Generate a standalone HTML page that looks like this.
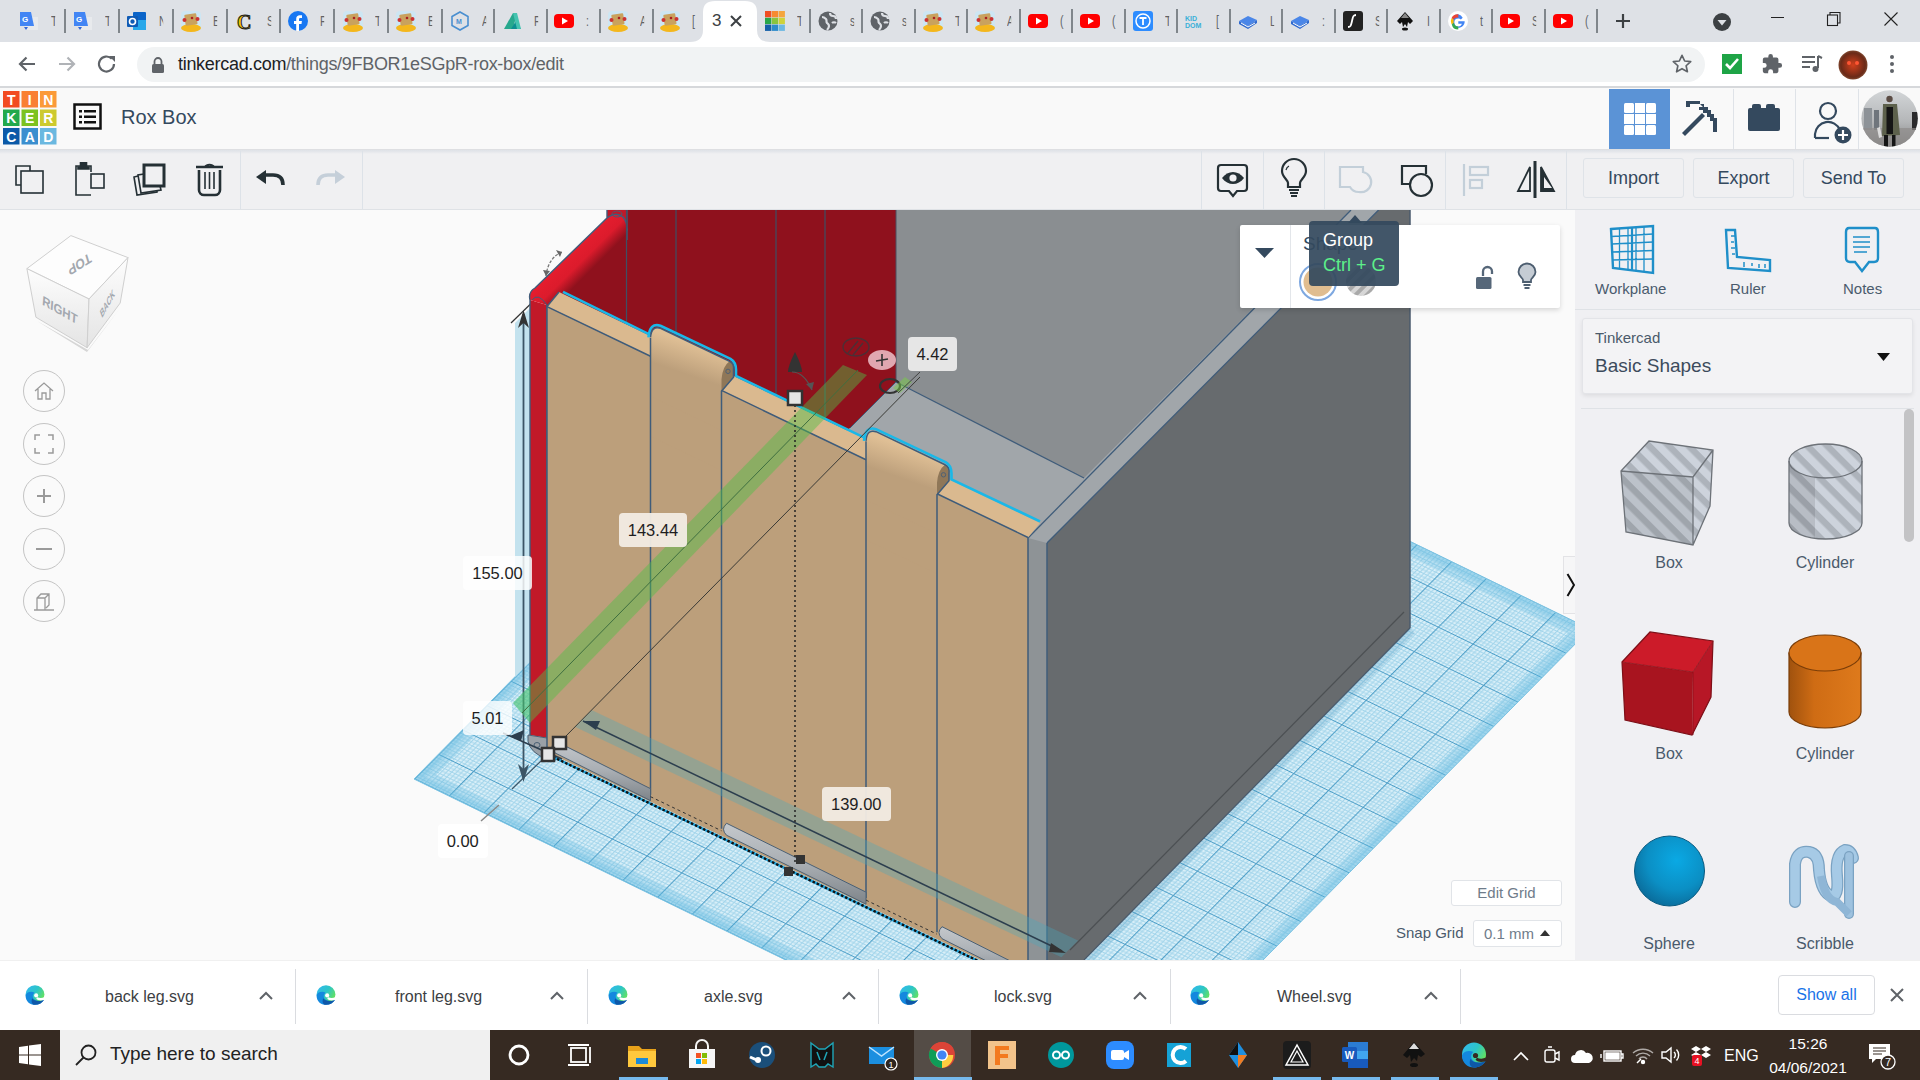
<!DOCTYPE html>
<html><head><meta charset="utf-8">
<style>
*{margin:0;padding:0;box-sizing:border-box}
html,body{width:1920px;height:1080px;overflow:hidden;background:#fafafa;font-family:"Liberation Sans",sans-serif}
.a{position:absolute}
svg{position:absolute;overflow:visible}
#tabs{left:0;top:0;width:1920px;height:42px;background:#dee1e6}
#addr{left:0;top:42px;width:1920px;height:46px;background:#fff;border-bottom:2px solid #d6d8db}
#omni{left:137px;top:47px;width:1568px;height:35px;border-radius:18px;background:#f1f3f4}
#tchead{left:0;top:88px;width:1920px;height:62px;background:#f9f9f9;border-bottom:1px solid #dedfe2}
#tbar{left:0;top:151px;width:1920px;height:59px;background:#f0f0f2}
#view{left:0;top:210px;width:1575px;height:750px;background:#fafafa;overflow:hidden}
#panel{left:1575px;top:210px;width:345px;height:750px;background:#f0f0f3}
#dl{left:0;top:960px;width:1920px;height:70px;background:#fff;border-top:1px solid #f0f0f0}
#task{left:0;top:1030px;width:1920px;height:50px;background:#362a22}
.lbl{position:absolute;background:rgba(255,255,255,.92);border-radius:4px;font-size:16.5px;color:#1e1e1e;text-align:center;line-height:34px;height:34px}
</style></head><body>
<div id="tabs" class="a">
<div class="a" style="left:64px;top:9px;width:1.5px;height:24px;background:#80868b"></div>
<div class="a" style="left:118px;top:9px;width:1.5px;height:24px;background:#80868b"></div>
<div class="a" style="left:172px;top:9px;width:1.5px;height:24px;background:#80868b"></div>
<div class="a" style="left:226px;top:9px;width:1.5px;height:24px;background:#80868b"></div>
<div class="a" style="left:279px;top:9px;width:1.5px;height:24px;background:#80868b"></div>
<div class="a" style="left:333px;top:9px;width:1.5px;height:24px;background:#80868b"></div>
<div class="a" style="left:387px;top:9px;width:1.5px;height:24px;background:#80868b"></div>
<div class="a" style="left:441px;top:9px;width:1.5px;height:24px;background:#80868b"></div>
<div class="a" style="left:493px;top:9px;width:1.5px;height:24px;background:#80868b"></div>
<div class="a" style="left:546px;top:9px;width:1.5px;height:24px;background:#80868b"></div>
<div class="a" style="left:599px;top:9px;width:1.5px;height:24px;background:#80868b"></div>
<div class="a" style="left:652px;top:9px;width:1.5px;height:24px;background:#80868b"></div>
<div class="a" style="left:809px;top:9px;width:1.5px;height:24px;background:#80868b"></div>
<div class="a" style="left:861px;top:9px;width:1.5px;height:24px;background:#80868b"></div>
<div class="a" style="left:914px;top:9px;width:1.5px;height:24px;background:#80868b"></div>
<div class="a" style="left:966px;top:9px;width:1.5px;height:24px;background:#80868b"></div>
<div class="a" style="left:1019px;top:9px;width:1.5px;height:24px;background:#80868b"></div>
<div class="a" style="left:1071px;top:9px;width:1.5px;height:24px;background:#80868b"></div>
<div class="a" style="left:1124px;top:9px;width:1.5px;height:24px;background:#80868b"></div>
<div class="a" style="left:1176px;top:9px;width:1.5px;height:24px;background:#80868b"></div>
<div class="a" style="left:1229px;top:9px;width:1.5px;height:24px;background:#80868b"></div>
<div class="a" style="left:1281px;top:9px;width:1.5px;height:24px;background:#80868b"></div>
<div class="a" style="left:1334px;top:9px;width:1.5px;height:24px;background:#80868b"></div>
<div class="a" style="left:1386px;top:9px;width:1.5px;height:24px;background:#80868b"></div>
<div class="a" style="left:1439px;top:9px;width:1.5px;height:24px;background:#80868b"></div>
<div class="a" style="left:1491px;top:9px;width:1.5px;height:24px;background:#80868b"></div>
<div class="a" style="left:1544px;top:9px;width:1.5px;height:24px;background:#80868b"></div>
<div class="a" style="left:1596px;top:9px;width:1.5px;height:24px;background:#80868b"></div>
<svg width="20" height="20" style="left:19px;top:11px" viewBox="0 0 20 20"><rect x="6" y="6" width="13" height="13" fill="#e8eaed"/><path d="M8 9l4 4" stroke="#777" stroke-width="1.2"/><path d="M1 1h11l3 14H1z" fill="#4285f4"/><path d="M5 16l4 0-2 3z" fill="#3367d6"/><text x="3" y="11" font-size="8" fill="#fff" font-family="Liberation Sans" font-weight="bold">G</text></svg>
<div class="a" style="left:51px;top:12px;width:6px;height:18px;overflow:hidden;font-size:15px;color:#5f6368;transform:scaleX(.7);transform-origin:0 0">T</div>
<svg width="20" height="20" style="left:73px;top:11px" viewBox="0 0 20 20"><rect x="6" y="6" width="13" height="13" fill="#e8eaed"/><path d="M8 9l4 4" stroke="#777" stroke-width="1.2"/><path d="M1 1h11l3 14H1z" fill="#4285f4"/><path d="M5 16l4 0-2 3z" fill="#3367d6"/><text x="3" y="11" font-size="8" fill="#fff" font-family="Liberation Sans" font-weight="bold">G</text></svg>
<div class="a" style="left:105px;top:12px;width:6px;height:18px;overflow:hidden;font-size:15px;color:#5f6368;transform:scaleX(.7);transform-origin:0 0">T</div>
<svg width="20" height="20" style="left:127px;top:11px" viewBox="0 0 20 20"><rect x="6" y="1" width="13" height="18" rx="1" fill="#0a64c9"/><path d="M6 9h13v10H6z" fill="#28a8ea"/><rect x="0" y="5" width="11" height="11" rx="1" fill="#0f5bb5"/><circle cx="5.5" cy="10.5" r="3" fill="none" stroke="#fff" stroke-width="1.6"/></svg>
<div class="a" style="left:159px;top:12px;width:6px;height:18px;overflow:hidden;font-size:15px;color:#5f6368;transform:scaleX(.7);transform-origin:0 0">N</div>
<svg width="20" height="20" style="left:181px;top:11px" viewBox="0 0 20 20"><rect x="0" y="0" width="20" height="20" rx="4" fill="#cde6f3"/><ellipse cx="10" cy="17" rx="10" ry="4" fill="#f4b71c"/><rect x="4" y="3" width="12" height="11" rx="1" fill="#c9a25e" transform="rotate(-8 10 9)"/><circle cx="3.5" cy="9" r="2" fill="#c33"/><circle cx="16.5" cy="8" r="2" fill="#c33"/><circle cx="11" cy="7" r="1.3" fill="#a22"/></svg>
<div class="a" style="left:213px;top:12px;width:6px;height:18px;overflow:hidden;font-size:15px;color:#5f6368;transform:scaleX(.7);transform-origin:0 0">E</div>
<svg width="20" height="20" style="left:235px;top:11px" viewBox="0 0 20 20"><text x="2" y="18" font-size="20" font-weight="bold" font-family="Liberation Serif" fill="#f5c400" stroke="#222" stroke-width="1">C</text></svg>
<div class="a" style="left:267px;top:12px;width:6px;height:18px;overflow:hidden;font-size:15px;color:#5f6368;transform:scaleX(.7);transform-origin:0 0">S</div>
<svg width="20" height="20" style="left:288px;top:11px" viewBox="0 0 20 20"><circle cx="10" cy="10" r="10" fill="#1877f2"/><path d="M11 20v-7h2.5l.4-3H11V8.3c0-.8.3-1.4 1.5-1.4H14V4.3c-.3 0-1.2-.1-2.2-.1-2.2 0-3.6 1.3-3.6 3.7V10H6v3h2.2v7z" fill="#fff"/></svg>
<div class="a" style="left:320px;top:12px;width:6px;height:18px;overflow:hidden;font-size:15px;color:#5f6368;transform:scaleX(.7);transform-origin:0 0">F</div>
<svg width="20" height="20" style="left:343px;top:11px" viewBox="0 0 20 20"><rect x="0" y="0" width="20" height="20" rx="4" fill="#cde6f3"/><ellipse cx="10" cy="17" rx="10" ry="4" fill="#f4b71c"/><rect x="4" y="3" width="12" height="11" rx="1" fill="#c9a25e" transform="rotate(-8 10 9)"/><circle cx="3.5" cy="9" r="2" fill="#c33"/><circle cx="16.5" cy="8" r="2" fill="#c33"/><circle cx="11" cy="7" r="1.3" fill="#a22"/></svg>
<div class="a" style="left:375px;top:12px;width:6px;height:18px;overflow:hidden;font-size:15px;color:#5f6368;transform:scaleX(.7);transform-origin:0 0">T</div>
<svg width="20" height="20" style="left:396px;top:11px" viewBox="0 0 20 20"><rect x="0" y="0" width="20" height="20" rx="4" fill="#cde6f3"/><ellipse cx="10" cy="17" rx="10" ry="4" fill="#f4b71c"/><rect x="4" y="3" width="12" height="11" rx="1" fill="#c9a25e" transform="rotate(-8 10 9)"/><circle cx="3.5" cy="9" r="2" fill="#c33"/><circle cx="16.5" cy="8" r="2" fill="#c33"/><circle cx="11" cy="7" r="1.3" fill="#a22"/></svg>
<div class="a" style="left:428px;top:12px;width:6px;height:18px;overflow:hidden;font-size:15px;color:#5f6368;transform:scaleX(.7);transform-origin:0 0">E</div>
<svg width="20" height="20" style="left:450px;top:11px" viewBox="0 0 20 20"><path d="M10 1l8 4.5v9L10 19l-8-4.5v-9z" fill="none" stroke="#4a8fd0" stroke-width="1.6"/><text x="6" y="13" font-size="7" fill="#4a8fd0" font-weight="bold" font-family="Liberation Sans">M</text></svg>
<div class="a" style="left:482px;top:12px;width:6px;height:18px;overflow:hidden;font-size:15px;color:#5f6368;transform:scaleX(.7);transform-origin:0 0">A</div>
<svg width="20" height="20" style="left:502px;top:11px" viewBox="0 0 20 20"><path d="M2 18L11 2h4l-4 16z" fill="#27a88e"/><path d="M9 18l5-8 5 8z" fill="#0d8f92"/><path d="M11 2h4l4 16h-4z" fill="#45c3b1"/></svg>
<div class="a" style="left:534px;top:12px;width:6px;height:18px;overflow:hidden;font-size:15px;color:#5f6368;transform:scaleX(.7);transform-origin:0 0">F</div>
<svg width="20" height="20" style="left:554px;top:11px" viewBox="0 0 20 20"><rect x="0" y="3" width="20" height="14" rx="4" fill="#ff0000"/><path d="M8 6.5l6 3.5-6 3.5z" fill="#fff"/></svg>
<div class="a" style="left:586px;top:12px;width:6px;height:18px;overflow:hidden;font-size:15px;color:#5f6368;transform:scaleX(.7);transform-origin:0 0">:</div>
<svg width="20" height="20" style="left:608px;top:11px" viewBox="0 0 20 20"><rect x="0" y="0" width="20" height="20" rx="4" fill="#cde6f3"/><ellipse cx="10" cy="17" rx="10" ry="4" fill="#f4b71c"/><rect x="4" y="3" width="12" height="11" rx="1" fill="#c9a25e" transform="rotate(-8 10 9)"/><circle cx="3.5" cy="9" r="2" fill="#c33"/><circle cx="16.5" cy="8" r="2" fill="#c33"/><circle cx="11" cy="7" r="1.3" fill="#a22"/></svg>
<div class="a" style="left:640px;top:12px;width:6px;height:18px;overflow:hidden;font-size:15px;color:#5f6368;transform:scaleX(.7);transform-origin:0 0">A</div>
<svg width="20" height="20" style="left:660px;top:11px" viewBox="0 0 20 20"><rect x="0" y="0" width="20" height="20" rx="4" fill="#cde6f3"/><ellipse cx="10" cy="17" rx="10" ry="4" fill="#f4b71c"/><rect x="4" y="3" width="12" height="11" rx="1" fill="#c9a25e" transform="rotate(-8 10 9)"/><circle cx="3.5" cy="9" r="2" fill="#c33"/><circle cx="16.5" cy="8" r="2" fill="#c33"/><circle cx="11" cy="7" r="1.3" fill="#a22"/></svg>
<div class="a" style="left:692px;top:12px;width:6px;height:18px;overflow:hidden;font-size:15px;color:#5f6368;transform:scaleX(.7);transform-origin:0 0">[</div>
<svg width="20" height="20" style="left:765px;top:11px" viewBox="0 0 20 20"><rect x="0.0" y="0.0" width="6.3" height="6.3" fill="#f04e23"/><rect x="6.8" y="0.0" width="6.3" height="6.3" fill="#f68a31"/><rect x="13.6" y="0.0" width="6.3" height="6.3" fill="#f5a53d"/><rect x="0.0" y="6.8" width="6.3" height="6.3" fill="#29a74a"/><rect x="6.8" y="6.8" width="6.3" height="6.3" fill="#8ac43f"/><rect x="13.6" y="6.8" width="6.3" height="6.3" fill="#cfd23a"/><rect x="0.0" y="13.6" width="6.3" height="6.3" fill="#1560a8"/><rect x="6.8" y="13.6" width="6.3" height="6.3" fill="#2e8ccb"/><rect x="13.6" y="13.6" width="6.3" height="6.3" fill="#6db8e2"/></svg>
<div class="a" style="left:797px;top:12px;width:6px;height:18px;overflow:hidden;font-size:15px;color:#5f6368;transform:scaleX(.7);transform-origin:0 0">T</div>
<svg width="20" height="20" style="left:818px;top:11px" viewBox="0 0 20 20"><circle cx="10" cy="10" r="9.5" fill="#5f6368"/><path d="M4 6c2 0 3 1 4 2s0 3 1 4 2 1 2 3-1 3-2 4M12 2c0 2 1 3 3 3s3 1 3 3M14 12c1-1 3-1 4 0" stroke="#dee1e6" stroke-width="2.2" fill="none"/></svg>
<div class="a" style="left:850px;top:12px;width:6px;height:18px;overflow:hidden;font-size:15px;color:#5f6368;transform:scaleX(.7);transform-origin:0 0">s</div>
<svg width="20" height="20" style="left:870px;top:11px" viewBox="0 0 20 20"><circle cx="10" cy="10" r="9.5" fill="#5f6368"/><path d="M4 6c2 0 3 1 4 2s0 3 1 4 2 1 2 3-1 3-2 4M12 2c0 2 1 3 3 3s3 1 3 3M14 12c1-1 3-1 4 0" stroke="#dee1e6" stroke-width="2.2" fill="none"/></svg>
<div class="a" style="left:902px;top:12px;width:6px;height:18px;overflow:hidden;font-size:15px;color:#5f6368;transform:scaleX(.7);transform-origin:0 0">s</div>
<svg width="20" height="20" style="left:923px;top:11px" viewBox="0 0 20 20"><rect x="0" y="0" width="20" height="20" rx="4" fill="#cde6f3"/><ellipse cx="10" cy="17" rx="10" ry="4" fill="#f4b71c"/><rect x="4" y="3" width="12" height="11" rx="1" fill="#c9a25e" transform="rotate(-8 10 9)"/><circle cx="3.5" cy="9" r="2" fill="#c33"/><circle cx="16.5" cy="8" r="2" fill="#c33"/><circle cx="11" cy="7" r="1.3" fill="#a22"/></svg>
<div class="a" style="left:955px;top:12px;width:6px;height:18px;overflow:hidden;font-size:15px;color:#5f6368;transform:scaleX(.7);transform-origin:0 0">T</div>
<svg width="20" height="20" style="left:975px;top:11px" viewBox="0 0 20 20"><rect x="0" y="0" width="20" height="20" rx="4" fill="#cde6f3"/><ellipse cx="10" cy="17" rx="10" ry="4" fill="#f4b71c"/><rect x="4" y="3" width="12" height="11" rx="1" fill="#c9a25e" transform="rotate(-8 10 9)"/><circle cx="3.5" cy="9" r="2" fill="#c33"/><circle cx="16.5" cy="8" r="2" fill="#c33"/><circle cx="11" cy="7" r="1.3" fill="#a22"/></svg>
<div class="a" style="left:1007px;top:12px;width:6px;height:18px;overflow:hidden;font-size:15px;color:#5f6368;transform:scaleX(.7);transform-origin:0 0">A</div>
<svg width="20" height="20" style="left:1028px;top:11px" viewBox="0 0 20 20"><rect x="0" y="3" width="20" height="14" rx="4" fill="#ff0000"/><path d="M8 6.5l6 3.5-6 3.5z" fill="#fff"/></svg>
<div class="a" style="left:1060px;top:12px;width:6px;height:18px;overflow:hidden;font-size:15px;color:#5f6368;transform:scaleX(.7);transform-origin:0 0">(</div>
<svg width="20" height="20" style="left:1080px;top:11px" viewBox="0 0 20 20"><rect x="0" y="3" width="20" height="14" rx="4" fill="#ff0000"/><path d="M8 6.5l6 3.5-6 3.5z" fill="#fff"/></svg>
<div class="a" style="left:1112px;top:12px;width:6px;height:18px;overflow:hidden;font-size:15px;color:#5f6368;transform:scaleX(.7);transform-origin:0 0">(</div>
<svg width="20" height="20" style="left:1133px;top:11px" viewBox="0 0 20 20"><rect x="0" y="0" width="20" height="20" rx="3" fill="#2d8cff"/><circle cx="10" cy="10" r="7" fill="none" stroke="#fff" stroke-width="1.5"/><path d="M6.5 7h7M10 7v7" stroke="#fff" stroke-width="1.8"/></svg>
<div class="a" style="left:1165px;top:12px;width:6px;height:18px;overflow:hidden;font-size:15px;color:#5f6368;transform:scaleX(.7);transform-origin:0 0">T</div>
<svg width="20" height="20" style="left:1184px;top:11px" viewBox="0 0 20 20"><text x="1" y="10" font-size="7" fill="#3ab0d8" font-weight="bold" font-family="Liberation Sans">KID</text><text x="1" y="17" font-size="7" fill="#3ab0d8" font-weight="bold" font-family="Liberation Sans">DOM</text></svg>
<div class="a" style="left:1216px;top:12px;width:6px;height:18px;overflow:hidden;font-size:15px;color:#5f6368;transform:scaleX(.7);transform-origin:0 0">[</div>
<svg width="20" height="20" style="left:1238px;top:11px" viewBox="0 0 20 20"><path d="M1 10l9-5 9 4-9 6z" fill="#4a86e8"/><path d="M1 10v3l9 5 9-6v-3l-9 6z" fill="#2f6ad0"/><path d="M3 12l7 4 7-4" stroke="#fff" stroke-width="1" fill="none"/></svg>
<div class="a" style="left:1270px;top:12px;width:6px;height:18px;overflow:hidden;font-size:15px;color:#5f6368;transform:scaleX(.7);transform-origin:0 0">L</div>
<svg width="20" height="20" style="left:1290px;top:11px" viewBox="0 0 20 20"><path d="M1 10l9-5 9 4-9 6z" fill="#4a86e8"/><path d="M1 10v3l9 5 9-6v-3l-9 6z" fill="#2f6ad0"/><path d="M3 12l7 4 7-4" stroke="#fff" stroke-width="1" fill="none"/></svg>
<div class="a" style="left:1322px;top:12px;width:6px;height:18px;overflow:hidden;font-size:15px;color:#5f6368;transform:scaleX(.7);transform-origin:0 0">:</div>
<svg width="20" height="20" style="left:1343px;top:11px" viewBox="0 0 20 20"><rect x="0" y="0" width="20" height="20" rx="3" fill="#222"/><path d="M13 4c-3 0-3 2-4 6s-1 6-4 6" stroke="#fff" stroke-width="1.8" fill="none"/></svg>
<div class="a" style="left:1375px;top:12px;width:6px;height:18px;overflow:hidden;font-size:15px;color:#5f6368;transform:scaleX(.7);transform-origin:0 0">S</div>
<svg width="20" height="20" style="left:1395px;top:11px" viewBox="0 0 20 20"><path d="M10 1l8 9-3 3-2-2-1 5-2-3-2 3-1-5-2 2-3-3z" fill="#111"/><path d="M10 2l4 5h-8z" fill="#fff" opacity=".5"/><ellipse cx="10" cy="18" rx="3" ry="1.5" fill="#111"/></svg>
<div class="a" style="left:1427px;top:12px;width:6px;height:18px;overflow:hidden;font-size:15px;color:#5f6368;transform:scaleX(.7);transform-origin:0 0">I</div>
<svg width="20" height="20" style="left:1448px;top:11px" viewBox="0 0 20 20"><circle cx="10" cy="10" r="10" fill="#fff"/><path d="M16.5 10.2h-6.2v2.5h3.6c-.4 1.6-1.8 2.8-3.6 2.8a4 4 0 010-8c1 0 1.9.4 2.6 1l1.8-1.8A6.6 6.6 0 0010.3 3.3a6.7 6.7 0 100 13.4c3.6 0 6.4-2.6 6.4-6.5z" fill="#4285f4"/><path d="M3.6 7l2.2 1.6A4 4 0 0110.3 6.8V3.3A6.7 6.7 0 003.6 7z" fill="#ea4335"/><path d="M3.8 13.4l2.2-1.8a4 4 0 004.3 4v3a6.7 6.7 0 01-6.5-5.2z" fill="#34a853"/><path d="M3.6 7a6.7 6.7 0 000 6.4l2.2-1.8a4 4 0 010-2.9z" fill="#fbbc05"/></svg>
<div class="a" style="left:1480px;top:12px;width:6px;height:18px;overflow:hidden;font-size:15px;color:#5f6368;transform:scaleX(.7);transform-origin:0 0">t</div>
<svg width="20" height="20" style="left:1500px;top:11px" viewBox="0 0 20 20"><rect x="0" y="3" width="20" height="14" rx="4" fill="#ff0000"/><path d="M8 6.5l6 3.5-6 3.5z" fill="#fff"/></svg>
<div class="a" style="left:1532px;top:12px;width:6px;height:18px;overflow:hidden;font-size:15px;color:#5f6368;transform:scaleX(.7);transform-origin:0 0">S</div>
<svg width="20" height="20" style="left:1553px;top:11px" viewBox="0 0 20 20"><rect x="0" y="3" width="20" height="14" rx="4" fill="#ff0000"/><path d="M8 6.5l6 3.5-6 3.5z" fill="#fff"/></svg>
<div class="a" style="left:1585px;top:12px;width:6px;height:18px;overflow:hidden;font-size:15px;color:#5f6368;transform:scaleX(.7);transform-origin:0 0">(</div>
<svg width="80" height="42" style="left:690px;top:0" viewBox="0 0 80 42"><path d="M0 42 Q13 42 13 30 V12 Q13 1 25 1 H55 Q67 1 67 12 V30 Q67 42 80 42 Z" fill="#fff"/></svg>
<div class="a" style="left:712px;top:11px;font-size:17px;color:#3c4043">3</div>
<svg width="14" height="14" style="left:729px;top:14px" viewBox="0 0 14 14"><path d="M2 2L12 12M12 2L2 12" stroke="#3c4043" stroke-width="2"/></svg>
<svg width="20" height="20" style="left:1613px;top:11px" viewBox="0 0 20 20"><path d="M10 3v14M3 10h14" stroke="#3c4043" stroke-width="2.2"/></svg>
<svg width="20" height="20" style="left:1712px;top:11.5px" viewBox="0 0 20 20"><circle cx="10" cy="10" r="9" fill="#3c4043"/><path d="M5.5 8h9l-4.5 5.5z" fill="#dee1e6"/></svg>
<div class="a" style="left:1771px;top:17px;width:13px;height:1px;background:#222"></div>
<svg width="16" height="16" style="left:1826px;top:11px" viewBox="0 0 16 16"><rect x="1.5" y="4" width="10" height="10.5" fill="none" stroke="#222" stroke-width="1.1"/><path d="M4 4V1.5H14V12H11.5" fill="none" stroke="#222" stroke-width="1.1"/></svg>
<svg width="16" height="16" style="left:1883px;top:11px" viewBox="0 0 16 16"><path d="M1.5 1.5L14.5 14.5M14.5 1.5L1.5 14.5" stroke="#222" stroke-width="1.1"/></svg>
</div>
<div id="addr" class="a"></div><div id="omni" class="a"></div>
<svg width="22" height="22" style="left:16px;top:53px" viewBox="0 0 22 22"><path d="M19 11H4M10.5 4.5L4 11l6.5 6.5" stroke="#5f6368" stroke-width="2.2" fill="none"/></svg>
<svg width="22" height="22" style="left:56px;top:53px" viewBox="0 0 22 22"><path d="M3 11h15M11.5 4.5L18 11l-6.5 6.5" stroke="#b0b3b7" stroke-width="2.2" fill="none"/></svg>
<svg width="22" height="22" style="left:96px;top:53px" viewBox="0 0 22 22"><path d="M18 11a7.5 7.5 0 1 1-2.2-5.3" stroke="#5f6368" stroke-width="2.2" fill="none"/><path d="M13 3h6v6z" fill="#5f6368"/></svg>
<svg width="14" height="16" style="left:151px;top:57px" viewBox="0 0 14 16"><path d="M3.5 7V4.5a3.5 3.5 0 0 1 7 0V7" stroke="#5f6368" stroke-width="1.8" fill="none"/><rect x="1" y="7" width="12" height="9" rx="1.5" fill="#5f6368"/></svg>
<div class="a" style="left:178px;top:54px;font-size:18px;color:#202124;white-space:nowrap;letter-spacing:-0.3px">tinkercad.com<span style="color:#5f6368">/things/9FBOR1eSGpR-rox-box/edit</span></div>
<svg width="22" height="22" style="left:1671px;top:53px" viewBox="0 0 24 24"><path d="M12 2.5l2.9 6.2 6.6.7-5 4.5 1.4 6.6L12 17.1l-5.9 3.4 1.4-6.6-5-4.5 6.6-.7z" fill="none" stroke="#5f6368" stroke-width="1.8" stroke-linejoin="round"/></svg>
<svg width="22" height="22" style="left:1721px;top:53px" viewBox="0 0 22 22"><rect x="1" y="1" width="20" height="20" fill="#1ea446"/><path d="M5 11l4 4 8-9" stroke="#fff" stroke-width="2.6" fill="none"/></svg>
<svg width="22" height="22" style="left:1761px;top:53px" viewBox="0 0 24 24"><path d="M20.5 11H19V7a2 2 0 0 0-2-2h-4V3.5a2.5 2.5 0 0 0-5 0V5H4a2 2 0 0 0-2 2v3.8h1.5a2.7 2.7 0 0 1 0 5.4H2V20a2 2 0 0 0 2 2h3.8v-1.5a2.7 2.7 0 0 1 5.4 0V22H17a2 2 0 0 0 2-2v-4h1.5a2.5 2.5 0 0 0 0-5z" fill="#5f6368"/></svg>
<svg width="24" height="22" style="left:1800px;top:53px" viewBox="0 0 24 22"><path d="M2 4h13M2 9h13M2 14h8" stroke="#5f6368" stroke-width="2"/><path d="M18 3v12" stroke="#5f6368" stroke-width="2"/><circle cx="15.5" cy="16" r="3" fill="#5f6368"/><path d="M18 3l4 2" stroke="#5f6368" stroke-width="2"/></svg>
<svg width="30" height="30" style="left:1838px;top:50px" viewBox="0 0 30 30"><defs><radialGradient id="av" cx=".5" cy=".5" r=".6"><stop offset="0" stop-color="#d4401c"/><stop offset=".7" stop-color="#6a2a18"/><stop offset="1" stop-color="#9a6b4a"/></radialGradient></defs><circle cx="15" cy="15" r="14.5" fill="url(#av)"/><circle cx="11" cy="13" r="2" fill="#ff5533"/><circle cx="19" cy="13" r="2" fill="#ff5533"/></svg>
<svg width="8" height="22" style="left:1888px;top:53px" viewBox="0 0 8 22"><circle cx="4" cy="4" r="2" fill="#5f6368"/><circle cx="4" cy="11" r="2" fill="#5f6368"/><circle cx="4" cy="18" r="2" fill="#5f6368"/></svg>
<div id="tchead" class="a"></div>
<svg width="56" height="56" style="left:3px;top:91px" viewBox="0 0 56 56" font-family="Liberation Sans" font-weight="bold" font-size="14" text-anchor="middle" fill="#fff">
<rect x="0" y="0" width="16.5" height="16.5" fill="#f24b22"/><rect x="18.5" y="0" width="16.5" height="16.5" fill="#f97f33"/><rect x="37" y="0" width="16.5" height="16.5" fill="#fb9a38"/>
<rect x="0" y="18.5" width="16.5" height="16.5" fill="#22a94c"/><rect x="18.5" y="18.5" width="16.5" height="16.5" fill="#7dc21f"/><rect x="37" y="18.5" width="16.5" height="16.5" fill="#cdca2e"/>
<rect x="0" y="37" width="16.5" height="16.5" fill="#0c5aa8"/><rect x="18.5" y="37" width="16.5" height="16.5" fill="#3b8fcf"/><rect x="37" y="37" width="16.5" height="16.5" fill="#6ab8e0"/>
<text x="8.25" y="13.5">T</text><text x="26.75" y="13.5">I</text><text x="45.25" y="13.5">N</text>
<text x="8.25" y="32">K</text><text x="26.75" y="32">E</text><text x="45.25" y="32">R</text>
<text x="8.25" y="50.5">C</text><text x="26.75" y="50.5">A</text><text x="45.25" y="50.5">D</text>
</svg>
<svg width="30" height="28" style="left:73px;top:103px" viewBox="0 0 30 28"><rect x="1.5" y="1.5" width="26" height="24" fill="none" stroke="#111" stroke-width="2.5"/><rect x="6" y="7" width="3" height="2.5" fill="#111"/><rect x="11" y="7" width="12" height="2.5" fill="#111"/><rect x="6" y="12.5" width="3" height="2.5" fill="#111"/><rect x="11" y="12.5" width="12" height="2.5" fill="#111"/><rect x="6" y="18" width="3" height="2.5" fill="#111"/><rect x="11" y="18" width="12" height="2.5" fill="#111"/></svg>
<div class="a" style="left:121px;top:106px;font-size:20px;color:#34495e">Rox Box</div>
<div class="a" style="left:1609px;top:89px;width:61px;height:60px;background:#5b93d6"></div>
<svg width="34" height="34" style="left:1623px;top:102px" viewBox="0 0 34 34" fill="#fff"><rect x="1" y="1" width="10" height="10" rx="1.5"/><rect x="12" y="1" width="10" height="10"/><rect x="23" y="1" width="10" height="10" rx="1.5"/><rect x="1" y="12" width="10" height="10"/><rect x="12" y="12" width="10" height="10"/><rect x="23" y="12" width="10" height="10"/><rect x="1" y="23" width="10" height="10" rx="1.5"/><rect x="12" y="23" width="10" height="10"/><rect x="23" y="23" width="10" height="10" rx="1.5"/></svg>
<div class="a" style="left:1733px;top:89px;width:1px;height:60px;background:#dfe3e8"></div>
<div class="a" style="left:1795px;top:89px;width:1px;height:60px;background:#dfe3e8"></div>
<div class="a" style="left:1858px;top:89px;width:1px;height:60px;background:#dfe3e8"></div>
<svg width="40" height="40" style="left:1682px;top:99px" viewBox="0 0 40 40" fill="#34495e"><path d="M4 2h14v3H8v3H4z"/><path d="M18 5h4v3h4v3h3v4h3v4h3v14h-4V22h-3v-4h-3v-4h-4v-3h-4V8h4z"/><path d="M20 14l3 3L6 34l-3 3-3-3 3-3z"/></svg>
<svg width="34" height="28" style="left:1747px;top:104px" viewBox="0 0 34 28" fill="#34495e"><rect x="5" y="0" width="9" height="6" rx="2"/><rect x="19" y="0" width="9" height="6" rx="2"/><rect x="1" y="4" width="32" height="23" rx="2"/></svg>
<svg width="44" height="44" style="left:1812px;top:100px" viewBox="0 0 44 44"><circle cx="16" cy="11" r="8" fill="none" stroke="#34495e" stroke-width="2.2"/><path d="M3 38v-4a13 13 0 0 1 25-4" fill="none" stroke="#34495e" stroke-width="2.2"/><path d="M3 38h14" stroke="#34495e" stroke-width="2.2"/><circle cx="31" cy="35" r="8.5" fill="#34495e"/><path d="M31 30v10M26 35h10" stroke="#fff" stroke-width="2.2"/></svg>
<svg width="58" height="58" style="left:1861px;top:90px" viewBox="1861 90 58 58"><defs><linearGradient id="avg" x1="0" y1="0" x2="0" y2="1"><stop offset="0" stop-color="#d3d6d8"/><stop offset=".55" stop-color="#b4b6b8"/><stop offset="1" stop-color="#7f7f80"/></linearGradient><clipPath id="avc"><circle cx="1889.6" cy="118.5" r="28.2"/></clipPath></defs>
<g clip-path="url(#avc)"><rect x="1861" y="90" width="58" height="58" fill="url(#avg)"/>
<rect x="1864" y="108" width="8" height="22" fill="#8d9297"/><rect x="1874" y="110" width="5" height="20" fill="#6f757c"/><rect x="1912" y="112" width="6" height="18" fill="#2a2a2c"/><rect x="1861" y="128" width="58" height="20" fill="#8e8c8a" opacity=".7"/>
<path d="M1877,128 l2,10 l3,-1 l-2,-10z" fill="#eee" opacity=".8"/>
<circle cx="1889.5" cy="99" r="3.2" fill="#5b4c44"/>
<path d="M1883,104 L1897,104 L1900,135 L1882,136 Z" fill="#5d614c"/><path d="M1886.5,107 L1893,107 L1893,134 L1886.5,134 Z" fill="#151515"/>
<path d="M1884,135 h4 v12 h-4z M1892,135 h3.5 v12 h-3.5z" fill="#151515"/></g></svg>
<div id="tbar" class="a"></div>
<div class="a" style="left:0;top:150px;width:1920px;height:4px;background:linear-gradient(#dde0e6,rgba(240,240,242,0))"></div>
<div class="a" style="left:240px;top:151px;width:1px;height:59px;background:#dde2e8"></div>
<div class="a" style="left:362px;top:151px;width:1px;height:59px;background:#dde2e8"></div>
<div class="a" style="left:1201px;top:151px;width:1px;height:59px;background:#dde2e8"></div>
<div class="a" style="left:1263px;top:151px;width:1px;height:59px;background:#dde2e8"></div>
<div class="a" style="left:1324px;top:151px;width:1px;height:59px;background:#dde2e8"></div>
<div class="a" style="left:1445px;top:151px;width:1px;height:59px;background:#dde2e8"></div>
<div class="a" style="left:1566px;top:151px;width:1px;height:59px;background:#dde2e8"></div>
<div class="a" style="left:0;top:209px;width:1920px;height:1px;background:#dfe2e6"></div>
<svg width="34" height="34" style="left:13px;top:163px" viewBox="0 0 34 34" fill="none" stroke="#253035" stroke-width="1.6"><path d="M17 8V3H3v19h5"/><rect x="8" y="8" width="22" height="22"/></svg>
<svg width="34" height="36" style="left:72px;top:162px" viewBox="0 0 34 36" fill="none" stroke="#253035" stroke-width="1.6"><path d="M19 10V4H4v29h15"/><rect x="19" y="12" width="13" height="14"/><path d="M6 5h11v2H6z" fill="#253035"/><rect x="8.5" y="0.8" width="6" height="5" fill="#253035"/></svg>
<svg width="36" height="36" style="left:132px;top:162px" viewBox="0 0 36 36" fill="none" stroke="#253035"><rect x="12" y="3" width="20" height="21" stroke-width="3"/><path d="M12 12l-6 1 3 18 20-3-1-4" stroke-width="1.6"/><path d="M6 14l-4 1 3 18 20-3v-2" stroke-width="1.6"/></svg>
<svg width="32" height="38" style="left:194px;top:160px" viewBox="0 0 32 38" fill="none" stroke="#253035"><path d="M2 7h27" stroke-width="2.5"/><path d="M11 7a5 4 0 0 1 9 0" stroke-width="2"/><path d="M5 10v20a5 5 0 0 0 5 5h11a5 5 0 0 0 5-5V10" stroke-width="2.6"/><path d="M11 12v17M15.5 12v17M20 12v17" stroke-width="1.6"/></svg>
<svg width="32" height="20" style="left:256px;top:169px" viewBox="0 0 32 20"><path d="M0 8L10 1v14z" fill="#253035"/><path d="M9 6h8c6 0 10 3 10 10" stroke="#253035" stroke-width="3.6" fill="none"/></svg>
<svg width="32" height="20" style="left:315px;top:169px" viewBox="0 0 32 20"><path d="M30 8L20 1v14z" fill="#c5cfd9"/><path d="M21 6h-8C7 6 3 9 3 16" stroke="#c5cfd9" stroke-width="3.6" fill="none"/></svg>
<svg width="34" height="36" style="left:1216px;top:163px" viewBox="0 0 34 36" fill="none" stroke="#253035" stroke-width="2.2"><path d="M5 2h23a3 3 0 0 1 3 3v20a3 3 0 0 1-3 3h-7l-4 5-4-5H5a3 3 0 0 1-3-3V5a3 3 0 0 1 3-3z"/><path d="M6 15c6-8 16-8 22 0c-6 8-16 8-22 0z" fill="#253035" stroke="none"/><circle cx="17" cy="15" r="3.6" fill="#f0f0f2" stroke="none"/></svg>
<svg width="30" height="38" style="left:1279px;top:161px" viewBox="0 0 30 38" fill="none" stroke="#253035" stroke-width="2.2"><path d="M9 26v-4c0-3-6-6-6-12a12 12 0 0 1 24 0c0 6-6 9-6 12v4z"/><path d="M10 29h10M11 32h8M12 35h6" stroke-width="1.8"/><path d="M7 9a6 6 0 0 1 3-4" stroke-width="1.2"/></svg>
<svg width="36" height="36" style="left:1337px;top:163px" viewBox="0 0 36 36" fill="none" stroke="#c3cfd9" stroke-width="2.2"><path d="M3 4h23v5a10 10 0 0 1-4 20a10 10 0 0 1-9-5H3z"/></svg>
<svg width="36" height="36" style="left:1399px;top:163px" viewBox="0 0 36 36" fill="none" stroke="#253035" stroke-width="2.2"><path d="M12 21H3V3h24v8"/><circle cx="22" cy="22" r="11"/></svg>
<svg width="30" height="36" style="left:1462px;top:161px" viewBox="0 0 30 36" fill="none" stroke="#c3cfd9" stroke-width="2.2"><path d="M2 3v32"/><rect x="8" y="6" width="18" height="8"/><rect x="8" y="19" width="12" height="8"/></svg>
<svg width="40" height="40" style="left:1516px;top:159px" viewBox="0 0 40 40" fill="none" stroke="#253035"><path d="M19 2v37" stroke-width="3"/><path d="M14 8v24H2z" stroke-width="1.8"/><path d="M25 8v24h13z" fill="#253035" stroke-width="1.8"/><path d="M28 18v11h8z" fill="#f0f0f2" stroke="none"/></svg>
<div class="a" style="left:1583px;top:158px;width:101px;height:40px;border:1px solid #dfe3e8;border-radius:3px;font-size:18px;color:#34495e;text-align:center;line-height:38px">Import</div>
<div class="a" style="left:1693px;top:158px;width:101px;height:40px;border:1px solid #dfe3e8;border-radius:3px;font-size:18px;color:#34495e;text-align:center;line-height:38px">Export</div>
<div class="a" style="left:1803px;top:158px;width:101px;height:40px;border:1px solid #dfe3e8;border-radius:3px;font-size:18px;color:#34495e;text-align:center;line-height:38px">Send To</div>
<div id="view" class="a">
<svg width="1575" height="750" viewBox="0 210 1575 750" style="left:0;top:0">
<defs>
<pattern id="grid" patternUnits="userSpaceOnUse" width="10" height="10" patternTransform="matrix(3.469 1.691 2.41 -2.44 414 779)">
<rect x="0" y="0" width="10" height="10" fill="#d9eff8"/>
<path d="M1 0V10M2 0V10M3 0V10M4 0V10M5 0V10M6 0V10M7 0V10M8 0V10M9 0V10M0 1H10M0 2H10M0 3H10M0 4H10M0 5H10M0 6H10M0 7H10M0 8H10M0 9H10" stroke="#a3d5eb" stroke-width="0.3"/>
<path d="M0 0V10M0 0H10" stroke="#4e9fc8" stroke-width="0.6"/>
</pattern>
<linearGradient id="roll" x1="0" y1="1" x2="1" y2="0" gradientTransform="rotate(0)">
<stop offset="0" stop-color="#e81e30"/><stop offset="0.55" stop-color="#e01b2c"/><stop offset="1" stop-color="#9e1220"/>
</linearGradient>
<linearGradient id="hinge" gradientUnits="userSpaceOnUse" x1="0" y1="0" x2="12" y2="24">
<stop offset="0" stop-color="#dfbf95"/><stop offset="1" stop-color="#bc9f7b"/>
</linearGradient>
<linearGradient id="gr" x1="0" y1="0" x2="0" y2="1"><stop offset="0" stop-color="#c4c8cc"/><stop offset=".5" stop-color="#a9aeb3"/><stop offset="1" stop-color="#7e8489"/></linearGradient>
</defs>
<polygon points="414,779 896,291 1590,629 1108,1117" fill="url(#grid)"/>
<clipPath id="gclip"><polygon points="414,779 896,291 1590,629 1108,1117"/></clipPath>
<g clip-path="url(#gclip)"><polygon points="414,779 896,291 1590,629 1108,1117" fill="none" stroke="#5cb6e0" stroke-opacity=".28" stroke-width="26"/><polygon points="414,779 896,291 1590,629 1108,1117" fill="none" stroke="#5cb6e0" stroke-opacity=".25" stroke-width="12"/><line x1="1410" y1="628" x2="1084" y2="960" stroke="#3f8fb8" stroke-opacity=".22" stroke-width="14"/></g>
<polygon points="414,779 896,291 1590,629 1108,1117" fill="none" stroke="#7cc3e3" stroke-width="1"/>
<polygon points="896,210 1410,210 1410,628 1084,960 1028,960 1028,538 850,428 896,382" fill="#a1a6aa"/>
<polygon points="896,210 1351,210 1084,478 896,382" fill="#8a8e91"/>
<polygon points="896,382 1084,478 1028,538 700,560 850,428" fill="#a1a6aa"/>
<line x1="896" y1="382" x2="1084" y2="478" stroke="#3f5c7a" stroke-width="1.2"/>
<polygon points="1047,543 1378.6,210 1410,210 1410,628 1084,960 1047,960" fill="#676b6e"/>
<line x1="1028" y1="538" x2="1351" y2="210" stroke="#3f5c7a" stroke-width="1.3"/>
<line x1="1047" y1="543" x2="1378.6" y2="210" stroke="#3f5c7a" stroke-width="1.3"/>
<line x1="1410" y1="210" x2="1410" y2="628" stroke="#4a5a6c" stroke-width="1.5"/>
<line x1="1410" y1="628" x2="1084" y2="960" stroke="#4a5a6c" stroke-width="1.2"/>
<line x1="1404" y1="612" x2="1070" y2="950" stroke="#4c5053" stroke-width="1.2"/>
<polygon points="1028,538 1047,543 1047,960 1028,960" fill="#8e9396"/>
<line x1="1047" y1="543" x2="1047" y2="960" stroke="#3f5c7a" stroke-width="1.5"/>
<polygon points="625,210 896,210 896,382 850,428 700,560 547,745 547,305 625,228" fill="#8f111d"/>
<line x1="896" y1="210" x2="896" y2="382" stroke="#4a4f60" stroke-width="1"/>
<line x1="850" y1="428" x2="896" y2="382" stroke="#3f5c7a" stroke-width="1"/>
<polygon points="515,323 530,308 530,662 515,677" fill="#c3e2ee"/>
<line x1="523.5" y1="314" x2="523.5" y2="778" stroke="#3c5566" stroke-width="1.8"/>
<path d="M523.5,310 L518,328 L523.5,323 L529,328 Z" fill="#333"/>
<path d="M523.5,782 L518,764 L523.5,769 L529,764 Z" fill="#3c5566"/>
<line x1="511" y1="323" x2="547" y2="288" stroke="#333" stroke-width="1.2"/>
<line x1="512" y1="789" x2="541" y2="761" stroke="#3c5566" stroke-width="1.2"/>
<polygon points="530,300 547,305 547,738 530,735" fill="#c11928"/>
<linearGradient id="roll2" gradientUnits="userSpaceOnUse" x1="562" y1="263" x2="580" y2="281"><stop offset="0" stop-color="#e41d2e"/><stop offset=".5" stop-color="#dc1b2c"/><stop offset="1" stop-color="#8f111d"/></linearGradient>
<rect x="607" y="210" width="20" height="22" fill="#c01828"/><path d="M530,300 Q528,292 535,288 L607,218 Q616,211 623,217 Q628,223 627,232 L627,248 L547,328 L547,305 Z" fill="url(#roll2)"/>
<path d="M530,300 Q528,292 535,288 L607,218 V210 M607,218 Q616,211 623,217 Q628,223 627,232 M530,300 V735 M547,305 V740 M627,210 V240" stroke="#3f5c7a" stroke-width="1.4" fill="none"/><ellipse cx="617" cy="214" rx="5" ry="3" fill="none" stroke="#4e5a70" stroke-width="1"/>
<g stroke="#3f4f63" stroke-width="1.2"><line x1="626.5" y1="210" x2="626.5" y2="324.4"/><line x1="676" y1="210" x2="676" y2="348.15999999999997"/><line x1="776" y1="210" x2="776" y2="396.15999999999997"/><line x1="825" y1="210" x2="825" y2="419.68"/></g>
<path d="M532,300 Q538,292 547,305" stroke="#3f5c7a" stroke-width="1" fill="none"/>
<path d="M528,735 Q526,748 540,756 L556,760 L556,742 L547,738 Z" fill="#9aa0a6" stroke="#4a6075" stroke-width="1"/>
<ellipse cx="537" cy="745" rx="3" ry="2.5" fill="none" stroke="#4a6075" stroke-width="1"/>
<polygon points="547,306.6 1028,537.48 1028,982.88 547,752.0" fill="#bc9f7b"/>
<polygon points="559,292 1040,522.88 1028,537.48 547,306.6" fill="#dab98f"/>
<linearGradient id="hg1" gradientUnits="userSpaceOnUse" x1="690" y1="343" x2="680" y2="372"><stop offset="0" stop-color="#dfbf95"/><stop offset="1" stop-color="#bc9f7b"/></linearGradient>
<linearGradient id="hg2" gradientUnits="userSpaceOnUse" x1="905" y1="447" x2="895" y2="476"><stop offset="0" stop-color="#dfbf95"/><stop offset="1" stop-color="#bc9f7b"/></linearGradient>
<path d="M650.5,362.28000000000003 L650.5,337.42 Q651.5,325.42 660.5,328.22 L729.5,361.34000000000003 Q734.5,363.34000000000003 733.5,370.34000000000003 L733.5,377.34000000000003 L721.5,391.34000000000003 L721.5,430.36 L650.5,396.28000000000003 Z" fill="url(#hg1)" transform="translate(0,0)"/><path d="M650.5,396.28000000000003 L721.5,430.36 L721.5,470.36 L650.5,436.28000000000003 Z" fill="#bc9f7b"/><path d="M729.5,361.34000000000003 Q734.5,363.34000000000003 733.5,370.34000000000003 L733.5,377.34000000000003 L721.5,391.34000000000003 L721.5,379.34000000000003 Q722.5,366.34000000000003 729.5,361.34000000000003 Z" fill="#8f7758"/><circle cx="728.0" cy="371.34000000000003" r="2.2" fill="none" stroke="#4e6175" stroke-width="1"/><path d="M650.5,337.42 Q651.5,325.42 660.5,328.22 L729.5,361.34000000000003 Q734.5,363.34000000000003 733.5,370.34000000000003 L733.5,377.34000000000003 L721.5,391.34000000000003" stroke="#3f5c7a" stroke-width="1.5" fill="none"/>
<path d="M866,465.72 L866,440.86 Q867,428.86 876,431.65999999999997 L945,464.78 Q950,466.78 949,473.78 L949,480.78 L937,494.78 L937,533.8 L866,499.72 Z" fill="url(#hg2)" transform="translate(0,0)"/><path d="M866,499.72 L937,533.8 L937,573.8 L866,539.72 Z" fill="#bc9f7b"/><path d="M945,464.78 Q950,466.78 949,473.78 L949,480.78 L937,494.78 L937,482.78 Q938,469.78 945,464.78 Z" fill="#8f7758"/><circle cx="943.5" cy="474.78" r="2.2" fill="none" stroke="#4e6175" stroke-width="1"/><path d="M866,440.86 Q867,428.86 876,431.65999999999997 L945,464.78 Q950,466.78 949,473.78 L949,480.78 L937,494.78" stroke="#3f5c7a" stroke-width="1.5" fill="none"/>
<path d="M563,291.92 L649.0,334.2 L648.5,337.42 Q649.5,322.42 660.5,325.72 L730.5,358.84000000000003 Q736.5,362.34000000000003 736.0,371.34000000000003 L736.0,375.96 L864.5,437.64 L864,440.86 Q865,425.86 876,429.15999999999997 L946,462.28 Q952,465.78 951.5,474.78 L951.5,479.4 L1040,521.38" stroke="#1ab8e8" stroke-width="2.6" fill="none"/>
<g stroke="#3f5c7a" stroke-width="1.5" fill="none">
<path d="M547,306.6 L650.5,356.28000000000003 M721.5,390.36 L866,459.72 M937,493.8 L1028,537.48"/>
<path d="M559,292 L547,306.6"/>
<path d="M547,306.6 V747.0 M650.5,337.92 V794.68 M721.5,390.84000000000003 V828.76 M866,441.36 V898.12 M937,494.28 V932.2 M1028,537.48 V960"/>
</g>
<path d="M555,740.92 L650.5,788.68 L650.5,800.68 L555,752.92 Q549,746.92 555,740.92 Z" fill="url(#gr)" stroke="#4a6075" stroke-width="1"/>
<path d="M726.5,823.24 L866,892.12 L866,904.12 L726.5,835.24 Q720.5,829.24 726.5,823.24 Z" fill="url(#gr)" stroke="#4a6075" stroke-width="1"/>
<path d="M942,926.6800000000001 L1028,969.88 L1028,981.88 L942,938.6800000000001 Q936,932.6800000000001 942,926.6800000000001 Z" fill="url(#gr)" stroke="#4a6075" stroke-width="1"/>
<path d="M553,756.88 L1000,971.44" stroke="#1aa0d8" stroke-width="2.4"/>
<path d="M553,756.88 L1000,971.44" stroke="#111" stroke-width="2.4" stroke-dasharray="2.5,2"/>
<path d="M650.5,796.68 L721.5,830.76 M866,900.12 L937,934.2" stroke="#333" stroke-width="1" stroke-dasharray="3,3"/>
<polygon points="513,703 843,365 867,375 530,723" fill="rgba(80,190,70,0.45)"/>
<polygon points="513,703 530,685 530,723" fill="rgba(60,200,150,0.3)"/>
<line x1="522" y1="713" x2="858" y2="370" stroke="#3f6f40" stroke-width="1"/>
<polygon points="591.5,710 1078,940.6 1061.4,957.3 574.8,726.7" fill="rgba(70,170,190,0.33)"/>
<line x1="583" y1="721" x2="1062" y2="951" stroke="#2c3e4e" stroke-width="1.5"/>
<path d="M583,721 L600,721 L596,730 Z" fill="#2c3e4e"/>
<path d="M1066,953 L1051,943 L1049,952 Z" fill="#333"/>
<line x1="565" y1="737" x2="920" y2="377" stroke="#3a3a36" stroke-width="1"/>
<line x1="795" y1="405" x2="795" y2="865" stroke="#222" stroke-width="1.5" stroke-dasharray="2,3"/>
<path d="M795,352 Q788,366 788,372 L802,372 Q802,366 795,352 Z" fill="#333"/>
<path d="M792,372 Q804,372 812,390" stroke="#555" stroke-width="1.2" fill="none"/>
<path d="M812,390 L806,384 L814,382 Z" fill="#555"/>
<ellipse cx="856" cy="347" rx="13" ry="9" fill="none" stroke="#4a3036" stroke-width="1.3"/>
<path d="M848,353 L858,341 M853,355 L863,343" stroke="#4a3036" stroke-width="1.3"/>
<ellipse cx="882" cy="360" rx="14" ry="10" fill="#e0a7b0"/>
<path d="M876,361 L888,359 M882,354 V366" stroke="#333" stroke-width="1.6"/>
<ellipse cx="890" cy="386" rx="10" ry="7" fill="none" stroke="#333" stroke-width="2.2"/>
<polygon points="893,388 905,377 912,382 900,393" fill="rgba(120,205,70,0.5)"/>
<line x1="898" y1="393" x2="920" y2="372" stroke="#444" stroke-width="1"/>
<path d="M546,276 Q548,258 562,252" stroke="#777" stroke-width="1.3" fill="none" stroke-dasharray="3,1.5"/>
<path d="M562,252 L556,250 L560,257 Z M546,276 L543,270 L550,271 Z" fill="#666"/>
<line x1="481" y1="821" x2="499" y2="805" stroke="#888" stroke-width="1.5"/>
<line x1="503" y1="733" x2="562" y2="759" stroke="#2c3e4e" stroke-width="1.6"/>
<path d="M510,736 L524,730 L521,741 Z" fill="#2c3e4e"/>
<rect x="788" y="391" width="14" height="14" fill="#e6e6e6" stroke="#333" stroke-width="2.5"/>
<rect x="553" y="737" width="13" height="12" fill="#e6e6e6" stroke="#333" stroke-width="2.5"/>
<rect x="542" y="748" width="12" height="13" fill="#e6e6e6" stroke="#333" stroke-width="2.5"/>
<rect x="796" y="855" width="9" height="9" fill="#333"/>
<rect x="784" y="867" width="9" height="9" fill="#333"/>
</svg>
<div class="lbl" style="left:463px;top:346px;width:69px;background:rgba(255,255,255,.82)">155.00</div>
<div class="lbl" style="left:619px;top:303px;width:68px;background:rgba(242,236,228,.95)">143.44</div>
<div class="lbl" style="left:908px;top:127px;width:49px;background:#e6e6e6">4.42</div>
<div class="lbl" style="left:463px;top:491px;width:49px;background:rgba(255,255,255,.8)">5.01</div>
<div class="lbl" style="left:438px;top:614px;width:49.5px;background:rgba(255,255,255,.95)">0.00</div>
<div class="lbl" style="left:822px;top:577px;width:68.5px;background:rgba(242,236,228,.95)">139.00</div>
<svg width="140" height="140" style="left:10px;top:10px" viewBox="10 220 140 140" font-family="Liberation Sans" font-weight="bold" fill="#a3a8af">
<defs><linearGradient id="cl" x1="0" y1="0" x2="0" y2="1"><stop offset="0" stop-color="#fdfdfd"/><stop offset="1" stop-color="#e4e4e4"/></linearGradient></defs>
<polygon points="37,321 87,352 121,307 88,350" fill="#d6d6d6"/>
<polygon points="70.9,235.6 128,257.6 89,299 26.9,268.6" fill="#fdfdfd" stroke="#cfcfcf" stroke-width="1"/>
<polygon points="26.9,268.6 89,299 87.1,347.7 35.9,317.2" fill="url(#cl)" stroke="#cfcfcf" stroke-width="1"/>
<polygon points="89,299 128,257.6 120.2,303 87.1,347.7" fill="url(#cl)" stroke="#cfcfcf" stroke-width="1"/>
<text x="0" y="4" font-size="13" transform="translate(79.6,263.7) rotate(148) skewX(-15)" text-anchor="middle">TOP</text>
<text x="0" y="5" font-size="13" transform="matrix(0.87 0.49 -0.08 1 59.9 309.4)" text-anchor="middle">RIGHT</text>
<text x="0" y="4" font-size="10" transform="matrix(0.45 -0.8 0.35 0.95 107 303)" text-anchor="middle">BACK</text>
</svg>
<div class="a" style="left:23px;top:160px;width:42px;height:42px;border-radius:21px;border:1px solid #c4c4c4;background:#fafafa"></div>
<div class="a" style="left:23px;top:213px;width:42px;height:42px;border-radius:21px;border:1px solid #c4c4c4;background:#fafafa"></div>
<div class="a" style="left:23px;top:265px;width:42px;height:42px;border-radius:21px;border:1px solid #c4c4c4;background:#fafafa"></div>
<div class="a" style="left:23px;top:318px;width:42px;height:42px;border-radius:21px;border:1px solid #c4c4c4;background:#fafafa"></div>
<div class="a" style="left:23px;top:370px;width:42px;height:42px;border-radius:21px;border:1px solid #c4c4c4;background:#fafafa"></div>
<svg width="24" height="24" style="left:32px;top:169px" viewBox="0 0 24 24" fill="none" stroke="#9a9a9a" stroke-width="1.3"><path d="M3 12L12 4l9 8M6 10v10h4v-6h4v6h4V10"/></svg>
<svg width="24" height="24" style="left:32px;top:222px" viewBox="0 0 24 24" fill="none" stroke="#9a9a9a" stroke-width="1.5"><path d="M3 8V3h5M16 3h5v5M21 16v5h-5M8 21H3v-5"/></svg>
<svg width="24" height="24" style="left:32px;top:274px" viewBox="0 0 24 24" fill="none" stroke="#9a9a9a" stroke-width="2"><path d="M12 5v14M5 12h14"/></svg>
<svg width="24" height="24" style="left:32px;top:327px" viewBox="0 0 24 24" fill="none" stroke="#9a9a9a" stroke-width="2"><path d="M4 12h16"/></svg>
<svg width="24" height="24" style="left:32px;top:379px" viewBox="0 0 24 24" fill="none" stroke="#9a9a9a" stroke-width="1.3"><path d="M2 21h20M5 21V9l4-4h8v11l-3 3M5 9h8v12M13 9l4-4"/></svg>
<div class="a" style="left:1240px;top:15px;width:320px;height:83px;background:#fff;border-radius:2px;box-shadow:0 2px 5px rgba(0,0,0,.15)"></div>
<div class="a" style="left:1290px;top:15px;width:1px;height:83px;background:#e3e6ea"></div>
<svg width="20" height="12" style="left:1255px;top:37px" viewBox="0 0 20 12"><path d="M0 1h19l-9.5 10z" fill="#34495e"/></svg>
<div class="a" style="left:1303px;top:23px;font-size:19px;color:#34495e">Shape</div>
<svg width="40" height="40" style="left:1298px;top:52px" viewBox="0 0 40 40"><circle cx="20" cy="20" r="18" fill="none" stroke="#7ea8e0" stroke-width="2"/><circle cx="20" cy="20" r="14.5" fill="#e0bd90"/></svg>
<svg width="34" height="34" style="left:1344px;top:54px" viewBox="0 0 34 34"><defs><pattern id="gs" patternUnits="userSpaceOnUse" width="8" height="8" patternTransform="rotate(45)"><rect width="8" height="8" fill="#a9a9a9"/><rect width="4" height="8" fill="#d6d6d6"/></pattern></defs><circle cx="17" cy="17" r="15" fill="url(#gs)"/></svg>
<svg width="20" height="26" style="left:1475px;top:55px" viewBox="0 0 20 26"><path d="M8 11V6.5a4.5 4.5 0 0 1 9 0V9" fill="none" stroke="#566779" stroke-width="2.3"/><rect x="1" y="12" width="15.5" height="12" rx="1.5" fill="#566779"/></svg>
<svg width="22" height="28" style="left:1516px;top:54px" viewBox="0 0 22 28" stroke="#4d5e70" stroke-width="1.8"><path d="M7 18v-2c0-2-4.5-3.5-4.5-8a8.5 8.5 0 0 1 17 0c0 4.5-4.5 6-4.5 8v2z" fill="#c5ccd4"/><path d="M7.5 21h7M8.5 24h5" fill="none"/></svg>
<svg width="14" height="8" style="left:1348px;top:5px" viewBox="0 0 14 8"><path d="M0 8L7 0L14 8Z" fill="#34495e"/></svg><div class="a" style="left:1309px;top:11px;width:90px;height:65px;background:rgba(52,73,94,.93);border-radius:4px"></div>
<div class="a" style="left:1323px;top:20px;font-size:18px;color:#fff">Group</div>
<div class="a" style="left:1323px;top:45px;font-size:18px;color:#5cf08a">Ctrl + G</div>
<div class="a" style="left:1563px;top:346px;width:13px;height:58px;background:#f6f6f7;border:1px solid #e3e3e6;border-right:none"></div>
<svg width="10" height="26" style="left:1566px;top:362px" viewBox="0 0 10 26"><path d="M1.5 2L8 13L1.5 24" fill="none" stroke="#111" stroke-width="2"/></svg>
<div class="a" style="left:1451px;top:670px;width:111px;height:26px;background:#fff;border:1px solid #e1e4e8;border-radius:3px;font-size:15px;color:#6f7c8a;text-align:center;line-height:24px">Edit Grid</div>
<div class="a" style="left:1396px;top:924px;font-size:15px;color:#4a5a6c;top:714px">Snap Grid</div>
<div class="a" style="left:1473px;top:710px;width:89px;height:27px;background:#fff;border:1px solid #e1e4e8;border-radius:3px;font-size:15px;color:#6f7c8a;line-height:25px;padding-left:10px">0.1 mm</div>
<svg width="10" height="6" style="left:1540px;top:720px" viewBox="0 0 10 6"><path d="M0 6h10L5 0z" fill="#333"/></svg>
</div>
<div id="panel" class="a"></div>
<svg width="48" height="48" style="left:1607px;top:225px" viewBox="0 0 48 48" fill="none" stroke="#1f8fc9"><path d="M4 4L46 1V48L6 43Z" stroke-width="2.4"/><path d="M12.5 4V44M21 3V45M25 3V45M29 2.5V46M37 2V47M4.5 11.5L46 9M5 19L46 17M5 27L46 25.5M5.5 35L46 34" stroke-width="1.3"/><path d="M25 3V45" stroke-width="2.2"/></svg>
<div class="a" style="left:1595px;top:280px;font-size:15px;color:#4a5b6d">Workplane</div>
<svg width="48" height="48" style="left:1724px;top:228px" viewBox="0 0 48 48" fill="none" stroke="#1f8fc9" stroke-width="2.4"><path d="M2 2H11L13 29L46 32V43L4 40Z"/><path d="M7 8H11M7 14H10M7 20H11M8 26H11M20 34V39M28 35V38M35 36V40M41 36V40" stroke-width="1.5"/></svg>
<div class="a" style="left:1730px;top:280px;font-size:15px;color:#4a5b6d">Ruler</div>
<svg width="40" height="48" style="left:1843px;top:226px" viewBox="0 0 40 48" fill="none" stroke="#1f8fc9" stroke-width="2.4"><path d="M6 2H32Q35 2 35 6V32Q35 36 31 36H26L19 45L12 36H7Q3 36 3 32V6Q3 2 6 2Z"/><path d="M10 11H27M10 16H27M10 21H27M11 26H24" stroke-width="1.6"/></svg>
<div class="a" style="left:1843px;top:280px;font-size:15px;color:#4a5b6d">Notes</div>
<div class="a" style="left:1575px;top:309px;width:345px;height:1px;background:#dfe2e6"></div>
<div class="a" style="left:1582px;top:318px;width:331px;height:76px;background:#f3f3f5;border:1px solid #e3e4e8;border-radius:3px;box-shadow:0 2px 4px rgba(0,0,0,.08)"></div>
<div class="a" style="left:1595px;top:329px;font-size:15px;color:#4a5a6a">Tinkercad</div>
<div class="a" style="left:1595px;top:355px;font-size:19px;color:#3c4b5c">Basic Shapes</div>
<svg width="14" height="10" style="left:1877px;top:352px" viewBox="0 0 14 10"><path d="M0 1H13L6.5 9Z" fill="#111"/></svg>
<div class="a" style="left:1581px;top:408px;width:333px;height:1px;background:#dfe2e6"></div>
<div class="a" style="left:1904px;top:409px;width:10px;height:133px;background:#c3c3c5;border-radius:5px"></div>
<svg width="100" height="110" style="left:1618px;top:438px" viewBox="1618 438 100 110">
<defs><pattern id="str" patternUnits="userSpaceOnUse" width="14" height="14" patternTransform="rotate(-45)"><rect width="14" height="14" fill="#adb3bb"/><rect width="7.5" height="14" fill="#cdd3dc"/></pattern></defs>
<polygon points="1621,471 1649,441 1713,450 1693,477" fill="url(#str)"/>
<polygon points="1621,471 1693,477 1693,545 1626,532" fill="url(#str)"/>
<polygon points="1621,471 1693,477 1693,545 1626,532" fill="#000" opacity=".08"/>
<polygon points="1693,477 1713,450 1710,506 1693,545" fill="url(#str)"/>
<path d="M1621,471 L1649,441 L1713,450 L1710,506 L1693,545 L1626,532 Z M1621,471 L1693,477 L1713,450 M1693,477 V545" fill="none" stroke="#6d7278" stroke-width="1.3"/>
</svg>
<svg width="90" height="110" style="left:1782px;top:438px" viewBox="1782 438 90 110">
<path d="M1789,461 V523 A36.5,16 0 0 0 1862,523 V461 Z" fill="url(#str)"/>
<path d="M1789,461 V523 A36.5,16 0 0 0 1815,538 V470 Z" fill="#000" opacity=".1"/>
<ellipse cx="1825.5" cy="461" rx="36.5" ry="17" fill="url(#str)"/>
<path d="M1789,461 V523 A36.5,16 0 0 0 1862,523 V461" fill="none" stroke="#6d7278" stroke-width="1.3"/>
<ellipse cx="1825.5" cy="461" rx="36.5" ry="17" fill="none" stroke="#6d7278" stroke-width="1.3"/>
</svg>
<div class="a" style="left:1619px;top:554px;width:100px;text-align:center;font-size:16px;color:#4a5a6c">Box</div>
<div class="a" style="left:1775px;top:554px;width:100px;text-align:center;font-size:16px;color:#4a5a6c">Cylinder</div>
<svg width="100" height="110" style="left:1618px;top:628px" viewBox="1618 628 100 110">
<polygon points="1622,662 1650,632 1713,641 1693,672" fill="#cc1b29"/>
<polygon points="1622,662 1693,672 1692,735 1625,720" fill="#a8141f"/>
<polygon points="1693,672 1713,641 1711,697 1692,735" fill="#b71726"/>
<path d="M1622,662 L1650,632 L1713,641 L1711,697 L1692,735 L1625,720 Z" fill="none" stroke="#7d0f17" stroke-width="1.2"/>
<path d="M1622,662 L1693,672 L1713,641 M1693,672 V735" fill="none" stroke="#8d1019" stroke-width=".8"/>
</svg>
<svg width="90" height="110" style="left:1782px;top:628px" viewBox="1782 628 90 110">
<defs><linearGradient id="org" x1="0" x2="1"><stop offset="0" stop-color="#a0520e"/><stop offset=".35" stop-color="#cf6c14"/><stop offset="1" stop-color="#de7a1c"/></linearGradient></defs>
<path d="M1789,653 V712 A36,16 0 0 0 1861,712 V653 Z" fill="url(#org)" stroke="#7a3d08" stroke-width="1.2"/>
<ellipse cx="1825" cy="653" rx="36" ry="18" fill="#d97418" stroke="#7a3d08" stroke-width="1.2"/>
</svg>
<div class="a" style="left:1619px;top:745px;width:100px;text-align:center;font-size:16px;color:#4a5a6c">Box</div>
<div class="a" style="left:1775px;top:745px;width:100px;text-align:center;font-size:16px;color:#4a5a6c">Cylinder</div>
<svg width="90" height="90" style="left:1625px;top:826px" viewBox="1625 826 90 90">
<defs><radialGradient id="sph" cx=".6" cy=".35" r=".7"><stop offset="0" stop-color="#0aa9e4"/><stop offset=".6" stop-color="#0b8fc4"/><stop offset="1" stop-color="#0a6a98"/></radialGradient></defs>
<circle cx="1669.5" cy="871" r="35" fill="url(#sph)" stroke="#085a80" stroke-width="1"/>
</svg>
<svg width="80" height="90" style="left:1785px;top:840px" viewBox="0 0 80 90">
<path d="M10 62 V24 Q12 10 24 12 Q34 14 34 30 Q36 52 46 56 Q54 58 52 36 Q50 14 60 10 Q66 10 68 18" fill="none" stroke="#7aa2c2" stroke-width="12" stroke-linecap="round"/>
<path d="M10 62 V24 Q12 10 24 12 Q34 14 34 30 Q36 52 46 56 Q54 58 52 36 Q50 14 60 10 Q66 10 68 18" fill="none" stroke="#a6cae6" stroke-width="9.5" stroke-linecap="round"/>
<path d="M64 16 V74" stroke="#7aa2c2" stroke-width="10" stroke-linecap="round"/>
<path d="M64 16 V74" stroke="#9ec2df" stroke-width="7.5" stroke-linecap="round"/>
<path d="M36 36 Q40 60 52 62 L64 74" fill="none" stroke="#8fb6d6" stroke-width="8"/>
</svg>
<div class="a" style="left:1619px;top:935px;width:100px;text-align:center;font-size:16px;color:#4a5a6c">Sphere</div>
<div class="a" style="left:1775px;top:935px;width:100px;text-align:center;font-size:16px;color:#4a5a6c">Scribble</div>
<div id="dl" class="a"></div>
<svg width="22" height="22" style="left:24px;top:984px" viewBox="1 1 28 28"><defs><linearGradient id="eg0" x1="0" y1="0" x2="1" y2="0.6"><stop offset="0" stop-color="#33b8f2"/><stop offset=".55" stop-color="#2cc5c8"/><stop offset="1" stop-color="#66e35a"/></linearGradient></defs><circle cx="15" cy="14.5" r="12" fill="url(#eg0)"/><path d="M3 15.5C3 23 8.5 27.5 15 27.5c5 0 9.5-2.5 11.5-6.5-3 2-9 2.8-12.5-.5-2.5-2.5-2.5-6.5.5-8.5C11 10 4.5 10.5 3 15.5z" fill="#1488de"/><path d="M11.5 19c2.5 4 9 4.5 15 2-2 4-6.5 6.5-11.5 6.5-3.5 0-5.5-4-3.5-8.5z" fill="#0e58a8"/><circle cx="16.5" cy="15.5" r="2.6" fill="#ffffff"/><path d="M18 17.8c2.5 1.2 6 1.4 9-.2l-.5 3.4c-3.5 1.5-7.5 1.3-10-1.2z" fill="#ffffff"/></svg>
<div class="a" style="left:105px;top:988px;font-size:16px;color:#3c4043;white-space:nowrap">back leg.svg</div>
<svg width="16" height="10" style="left:258px;top:990px" viewBox="0 0 16 10"><path d="M2 9L8 3L14 9" stroke="#5f6368" stroke-width="2" fill="none"/></svg>
<svg width="22" height="22" style="left:315px;top:984px" viewBox="1 1 28 28"><defs><linearGradient id="eg1" x1="0" y1="0" x2="1" y2="0.6"><stop offset="0" stop-color="#33b8f2"/><stop offset=".55" stop-color="#2cc5c8"/><stop offset="1" stop-color="#66e35a"/></linearGradient></defs><circle cx="15" cy="14.5" r="12" fill="url(#eg1)"/><path d="M3 15.5C3 23 8.5 27.5 15 27.5c5 0 9.5-2.5 11.5-6.5-3 2-9 2.8-12.5-.5-2.5-2.5-2.5-6.5.5-8.5C11 10 4.5 10.5 3 15.5z" fill="#1488de"/><path d="M11.5 19c2.5 4 9 4.5 15 2-2 4-6.5 6.5-11.5 6.5-3.5 0-5.5-4-3.5-8.5z" fill="#0e58a8"/><circle cx="16.5" cy="15.5" r="2.6" fill="#ffffff"/><path d="M18 17.8c2.5 1.2 6 1.4 9-.2l-.5 3.4c-3.5 1.5-7.5 1.3-10-1.2z" fill="#ffffff"/></svg>
<div class="a" style="left:395px;top:988px;font-size:16px;color:#3c4043;white-space:nowrap">front leg.svg</div>
<svg width="16" height="10" style="left:549px;top:990px" viewBox="0 0 16 10"><path d="M2 9L8 3L14 9" stroke="#5f6368" stroke-width="2" fill="none"/></svg>
<svg width="22" height="22" style="left:607px;top:984px" viewBox="1 1 28 28"><defs><linearGradient id="eg2" x1="0" y1="0" x2="1" y2="0.6"><stop offset="0" stop-color="#33b8f2"/><stop offset=".55" stop-color="#2cc5c8"/><stop offset="1" stop-color="#66e35a"/></linearGradient></defs><circle cx="15" cy="14.5" r="12" fill="url(#eg2)"/><path d="M3 15.5C3 23 8.5 27.5 15 27.5c5 0 9.5-2.5 11.5-6.5-3 2-9 2.8-12.5-.5-2.5-2.5-2.5-6.5.5-8.5C11 10 4.5 10.5 3 15.5z" fill="#1488de"/><path d="M11.5 19c2.5 4 9 4.5 15 2-2 4-6.5 6.5-11.5 6.5-3.5 0-5.5-4-3.5-8.5z" fill="#0e58a8"/><circle cx="16.5" cy="15.5" r="2.6" fill="#ffffff"/><path d="M18 17.8c2.5 1.2 6 1.4 9-.2l-.5 3.4c-3.5 1.5-7.5 1.3-10-1.2z" fill="#ffffff"/></svg>
<div class="a" style="left:704px;top:988px;font-size:16px;color:#3c4043;white-space:nowrap">axle.svg</div>
<svg width="16" height="10" style="left:841px;top:990px" viewBox="0 0 16 10"><path d="M2 9L8 3L14 9" stroke="#5f6368" stroke-width="2" fill="none"/></svg>
<svg width="22" height="22" style="left:898px;top:984px" viewBox="1 1 28 28"><defs><linearGradient id="eg3" x1="0" y1="0" x2="1" y2="0.6"><stop offset="0" stop-color="#33b8f2"/><stop offset=".55" stop-color="#2cc5c8"/><stop offset="1" stop-color="#66e35a"/></linearGradient></defs><circle cx="15" cy="14.5" r="12" fill="url(#eg3)"/><path d="M3 15.5C3 23 8.5 27.5 15 27.5c5 0 9.5-2.5 11.5-6.5-3 2-9 2.8-12.5-.5-2.5-2.5-2.5-6.5.5-8.5C11 10 4.5 10.5 3 15.5z" fill="#1488de"/><path d="M11.5 19c2.5 4 9 4.5 15 2-2 4-6.5 6.5-11.5 6.5-3.5 0-5.5-4-3.5-8.5z" fill="#0e58a8"/><circle cx="16.5" cy="15.5" r="2.6" fill="#ffffff"/><path d="M18 17.8c2.5 1.2 6 1.4 9-.2l-.5 3.4c-3.5 1.5-7.5 1.3-10-1.2z" fill="#ffffff"/></svg>
<div class="a" style="left:994px;top:988px;font-size:16px;color:#3c4043;white-space:nowrap">lock.svg</div>
<svg width="16" height="10" style="left:1132px;top:990px" viewBox="0 0 16 10"><path d="M2 9L8 3L14 9" stroke="#5f6368" stroke-width="2" fill="none"/></svg>
<svg width="22" height="22" style="left:1189px;top:984px" viewBox="1 1 28 28"><defs><linearGradient id="eg4" x1="0" y1="0" x2="1" y2="0.6"><stop offset="0" stop-color="#33b8f2"/><stop offset=".55" stop-color="#2cc5c8"/><stop offset="1" stop-color="#66e35a"/></linearGradient></defs><circle cx="15" cy="14.5" r="12" fill="url(#eg4)"/><path d="M3 15.5C3 23 8.5 27.5 15 27.5c5 0 9.5-2.5 11.5-6.5-3 2-9 2.8-12.5-.5-2.5-2.5-2.5-6.5.5-8.5C11 10 4.5 10.5 3 15.5z" fill="#1488de"/><path d="M11.5 19c2.5 4 9 4.5 15 2-2 4-6.5 6.5-11.5 6.5-3.5 0-5.5-4-3.5-8.5z" fill="#0e58a8"/><circle cx="16.5" cy="15.5" r="2.6" fill="#ffffff"/><path d="M18 17.8c2.5 1.2 6 1.4 9-.2l-.5 3.4c-3.5 1.5-7.5 1.3-10-1.2z" fill="#ffffff"/></svg>
<div class="a" style="left:1277px;top:988px;font-size:16px;color:#3c4043;white-space:nowrap">Wheel.svg</div>
<svg width="16" height="10" style="left:1423px;top:990px" viewBox="0 0 16 10"><path d="M2 9L8 3L14 9" stroke="#5f6368" stroke-width="2" fill="none"/></svg>
<div class="a" style="left:295px;top:969px;width:1px;height:55px;background:#dadce0"></div>
<div class="a" style="left:587px;top:969px;width:1px;height:55px;background:#dadce0"></div>
<div class="a" style="left:878px;top:969px;width:1px;height:55px;background:#dadce0"></div>
<div class="a" style="left:1170px;top:969px;width:1px;height:55px;background:#dadce0"></div>
<div class="a" style="left:1460px;top:969px;width:1px;height:55px;background:#dadce0"></div>
<div class="a" style="left:1778px;top:975px;width:97px;height:40px;border:1px solid #dadce0;border-radius:4px;font-size:16px;color:#1a73e8;text-align:center;line-height:38px">Show all</div>
<svg width="16" height="16" style="left:1889px;top:987px" viewBox="0 0 16 16"><path d="M2 2L14 14M14 2L2 14" stroke="#5f6368" stroke-width="2"/></svg>
<div id="task" class="a"></div>
<svg width="22" height="22" style="left:19px;top:1044px" viewBox="0 0 22 22" fill="#fff"><path d="M0 3l9-1.3V10.5H0zM10 1.5L22 0V10.5H10zM0 11.5H9V20.3L0 19zM10 11.5H22V22L10 20.5z"/></svg>
<div class="a" style="left:60px;top:1030px;width:430px;height:50px;background:#f0f0f0"></div>
<svg width="24" height="24" style="left:74px;top:1043px" viewBox="0 0 24 24" fill="none" stroke="#222" stroke-width="1.8"><circle cx="14.5" cy="9.5" r="7"/><path d="M9.5 14.5L2 22"/></svg>
<div class="a" style="left:110px;top:1043px;font-size:19px;color:#222">Type here to search</div>
<svg width="24" height="24" style="left:507px;top:1043px" viewBox="0 0 24 24"><circle cx="12" cy="12" r="9" fill="none" stroke="#fff" stroke-width="2.8"/></svg>
<svg width="26" height="24" style="left:567px;top:1043px" viewBox="0 0 26 24" fill="none" stroke="#fff" stroke-width="1.8"><rect x="4" y="5" width="15" height="14"/><path d="M1 2H22M1 22H22M23 4V20"/></svg>
<svg width="30" height="30" style="left:627px;top:1040px" viewBox="0 0 30 30"><path d="M1 6h11l3 3h14v18H1z" fill="#e8a21a"/><path d="M1 11h28v16H1z" fill="#ffc83d"/><rect x="9" y="18" width="12" height="6" fill="#1c8ad8"/></svg>
<svg width="30" height="30" style="left:687px;top:1040px" viewBox="0 0 30 30"><path d="M2 9h26v19H2z" fill="#f6f6f6"/><path d="M9 9V6a6 6 0 0 1 12 0v3" stroke="#f6f6f6" stroke-width="2" fill="none"/><rect x="9" y="13" width="5" height="5" fill="#f35325"/><rect x="15" y="13" width="5" height="5" fill="#81bc06"/><rect x="9" y="19" width="5" height="5" fill="#05a6f0"/><rect x="15" y="19" width="5" height="5" fill="#ffba08"/></svg>
<svg width="30" height="30" style="left:747px;top:1040px" viewBox="0 0 30 30"><circle cx="15" cy="15" r="13" fill="#1b4f7a"/><circle cx="19" cy="11" r="4.5" fill="none" stroke="#fff" stroke-width="2"/><path d="M3 17l9 4" stroke="#fff" stroke-width="3"/><circle cx="11" cy="20" r="3" fill="#fff"/></svg>
<svg width="30" height="30" style="left:807px;top:1040px" viewBox="0 0 30 30"><path d="M4 3l8 6h6l8-6v24l-5-3-3 3h-6l-3-3-5 3z" fill="#111" stroke="#1fa6b8" stroke-width="1.4"/><path d="M10 12l3 8M20 12l-3 8" stroke="#1fa6b8" stroke-width="1.5"/></svg>
<svg width="30" height="30" style="left:867px;top:1040px" viewBox="0 0 30 30"><rect x="2" y="7" width="25" height="17" fill="#1b8fe0"/><path d="M2 7l12.5 9L27 7" stroke="#bfe4ff" stroke-width="1.5" fill="none"/><circle cx="24" cy="24" r="6" fill="#2d2520" stroke="#fff" stroke-width="1.2"/><text x="24" y="28" font-size="9" fill="#fff" text-anchor="middle" font-family="Liberation Sans">1</text></svg>
<div class="a" style="left:914px;top:1030px;width:57px;height:50px;background:#544c46"></div>
<svg width="30" height="30" style="left:927px;top:1040px" viewBox="0 0 30 30"><circle cx="15" cy="15" r="13" fill="#db4437"/><path d="M15 15L3.7 8.5A13 13 0 0 1 26.3 8.5z" fill="#db4437"/><path d="M15 15l-11.3-6.5A13 13 0 0 0 15 28z" fill="#0f9d58"/><path d="M15 15h11.3A13 13 0 0 1 15 28z" fill="#ffcd40"/><circle cx="15" cy="15" r="6" fill="#fff"/><circle cx="15" cy="15" r="4.6" fill="#4285f4"/></svg>
<svg width="30" height="30" style="left:987px;top:1040px" viewBox="0 0 30 30"><rect x="1" y="1" width="28" height="28" fill="#f2c38b"/><path d="M8 6h14v4H13v4h8v4h-8v7H8z" fill="#f37a1f"/></svg>
<svg width="30" height="30" style="left:1046px;top:1040px" viewBox="0 0 30 30"><circle cx="15" cy="15" r="13" fill="#00979c"/><path d="M7 15a3.5 3.5 0 1 0 7 0a3.5 3.5 0 1 0-7 0M16 15a3.5 3.5 0 1 0 7 0a3.5 3.5 0 1 0-7 0" fill="none" stroke="#fff" stroke-width="2"/></svg>
<svg width="30" height="30" style="left:1105px;top:1040px" viewBox="0 0 30 30"><rect x="1" y="1" width="28" height="28" rx="8" fill="#2d8cff"/><rect x="6" y="10" width="13" height="10" rx="2" fill="#fff"/><path d="M19 13l5-3v10l-5-3z" fill="#fff"/></svg>
<svg width="30" height="30" style="left:1164px;top:1040px" viewBox="0 0 30 30"><path d="M3 3h24v24H3z" fill="#15a2d6"/><path d="M22 9a8 8 0 1 0 0 12" stroke="#fff" stroke-width="4" fill="none"/></svg>
<svg width="30" height="30" style="left:1223px;top:1040px" viewBox="0 0 30 30"><path d="M15 2L6 15l9 13 9-13z" fill="#1e8fe0"/><path d="M15 2L6 15h9z" fill="#111"/><path d="M15 15l9 0-9 13z" fill="#f07d23"/></svg>
<svg width="30" height="30" style="left:1282px;top:1040px" viewBox="0 0 30 30"><rect x="1" y="1" width="28" height="28" rx="4" fill="#1c1c1c"/><path d="M15 5L4 25h22z" fill="none" stroke="#fff" stroke-width="1.5"/><path d="M15 11L9 22h12z" fill="none" stroke="#fff" stroke-width="1.2"/></svg>
<svg width="30" height="30" style="left:1340px;top:1040px" viewBox="0 0 30 30"><rect x="8" y="2" width="20" height="26" rx="1.5" fill="#41a5ee"/><rect x="8" y="2" width="20" height="9" fill="#2b7cd3"/><rect x="8" y="19" width="20" height="9" fill="#185abd"/><rect x="2" y="7" width="15" height="15" rx="1.5" fill="#185abd"/><text x="9.5" y="19" font-size="10" fill="#fff" text-anchor="middle" font-family="Liberation Sans" font-weight="bold">W</text></svg>
<svg width="30" height="30" style="left:1399px;top:1040px" viewBox="0 0 30 30"><path d="M15 2l11 12-4 3-3-2-1 6-3-3-3 4-1-7-3 3-4-3z" fill="#111"/><path d="M15 3l5 6H10z" fill="#ddd"/><ellipse cx="15" cy="25" rx="4" ry="2" fill="#111"/></svg>
<svg width="30" height="30" style="left:1459px;top:1040px" viewBox="0 0 30 30"><defs><linearGradient id="tbe" x1="0" y1="0" x2="1" y2="0.6"><stop offset="0" stop-color="#33b8f2"/><stop offset=".55" stop-color="#2cc5c8"/><stop offset="1" stop-color="#66e35a"/></linearGradient></defs><circle cx="15" cy="14.5" r="12" fill="url(#tbe)"/><path d="M3 15.5C3 23 8.5 27.5 15 27.5c5 0 9.5-2.5 11.5-6.5-3 2-9 2.8-12.5-.5-2.5-2.5-2.5-6.5.5-8.5C11 10 4.5 10.5 3 15.5z" fill="#1488de"/><path d="M11.5 19c2.5 4 9 4.5 15 2-2 4-6.5 6.5-11.5 6.5-3.5 0-5.5-4-3.5-8.5z" fill="#0e58a8"/><circle cx="16.5" cy="15.5" r="2.6" fill="#362a22"/><path d="M18 17.8c2.5 1.2 6 1.4 9-.2l-.5 3.4c-3.5 1.5-7.5 1.3-10-1.2z" fill="#362a22"/></svg>
<div class="a" style="left:619px;top:1077px;width:49px;height:3px;background:#76b9ed"></div>
<div class="a" style="left:914px;top:1077px;width:58px;height:3px;background:#76b9ed"></div>
<div class="a" style="left:1273px;top:1077px;width:48px;height:3px;background:#76b9ed"></div>
<div class="a" style="left:1332px;top:1077px;width:48px;height:3px;background:#76b9ed"></div>
<div class="a" style="left:1391px;top:1077px;width:48px;height:3px;background:#76b9ed"></div>
<div class="a" style="left:1450px;top:1077px;width:48px;height:3px;background:#76b9ed"></div>
<svg width="18" height="12" style="left:1512px;top:1050px" viewBox="0 0 18 12"><path d="M2 10L9 3L16 10" stroke="#fff" stroke-width="1.6" fill="none"/></svg>
<svg width="20" height="20" style="left:1542px;top:1045px" viewBox="0 0 20 20" fill="none" stroke="#fff" stroke-width="1.4"><rect x="3" y="5" width="10" height="12" rx="2"/><path d="M13 9l4-2v8l-4-2M6 2h4"/></svg>
<svg width="24" height="16" style="left:1570px;top:1048px" viewBox="0 0 24 16"><path d="M5 15a4 4 0 0 1 0-8a6 6 0 0 1 11-2a4.5 4.5 0 0 1 3 10z" fill="#fff"/></svg>
<svg width="24" height="16" style="left:1600px;top:1048px" viewBox="0 0 24 16" fill="none" stroke="#fff" stroke-width="1.4"><rect x="4" y="3" width="17" height="10"/><path d="M21 6h2v4h-2" /><rect x="6" y="5" width="13" height="6" fill="#fff"/><path d="M1 6v4"/></svg>
<svg width="24" height="20" style="left:1631px;top:1045px" viewBox="0 0 24 20" fill="none" stroke="#fff" stroke-width="1.4"><path d="M2 8a15 15 0 0 1 20 0M5 11a10 10 0 0 1 14 0M8 14a5 5 0 0 1 8 0" opacity=".6"/><circle cx="12" cy="17" r="1.5" fill="#fff"/><path d="M6 18l4-4"/></svg>
<svg width="24" height="20" style="left:1660px;top:1045px" viewBox="0 0 24 20" fill="none" stroke="#fff" stroke-width="1.4"><path d="M2 7h4l5-4v14l-5-4H2z"/><path d="M14 7a4 4 0 0 1 0 6M16.5 4.5a8 8 0 0 1 0 11"/></svg>
<svg width="24" height="24" style="left:1689px;top:1043px" viewBox="0 0 24 24"><path d="M7 3l5 3-5 3-5-3zM17 3l5 3-5 3-5-3zM7 9l5 3-5 3-5-3zM17 9l5 3-5 3-5-3z" fill="#fff"/><rect x="3" y="12" width="10" height="11" rx="2" fill="#e81123"/><text x="8" y="21" font-size="9" fill="#fff" text-anchor="middle" font-family="Liberation Sans">4</text></svg>
<div class="a" style="left:1724px;top:1047px;font-size:16px;color:#fff">ENG</div>
<div class="a" style="left:1768px;top:1035px;width:80px;text-align:center;font-size:15.5px;color:#fff">15:26</div>
<div class="a" style="left:1758px;top:1059px;width:100px;text-align:center;font-size:15.5px;color:#fff">04/06/2021</div>
<svg width="30" height="30" style="left:1866px;top:1040px" viewBox="0 0 30 30"><path d="M3 4h21v15H10l-4 4v-4H3z" fill="#fff"/><path d="M7 8h13M7 11h13M7 14h9" stroke="#362a22" stroke-width="1.2"/><circle cx="22" cy="22" r="7" fill="#362a22" stroke="#fff" stroke-width="1.3"/><text x="22" y="26" font-size="11" fill="#fff" text-anchor="middle" font-family="Liberation Sans">7</text></svg>
</body></html>
